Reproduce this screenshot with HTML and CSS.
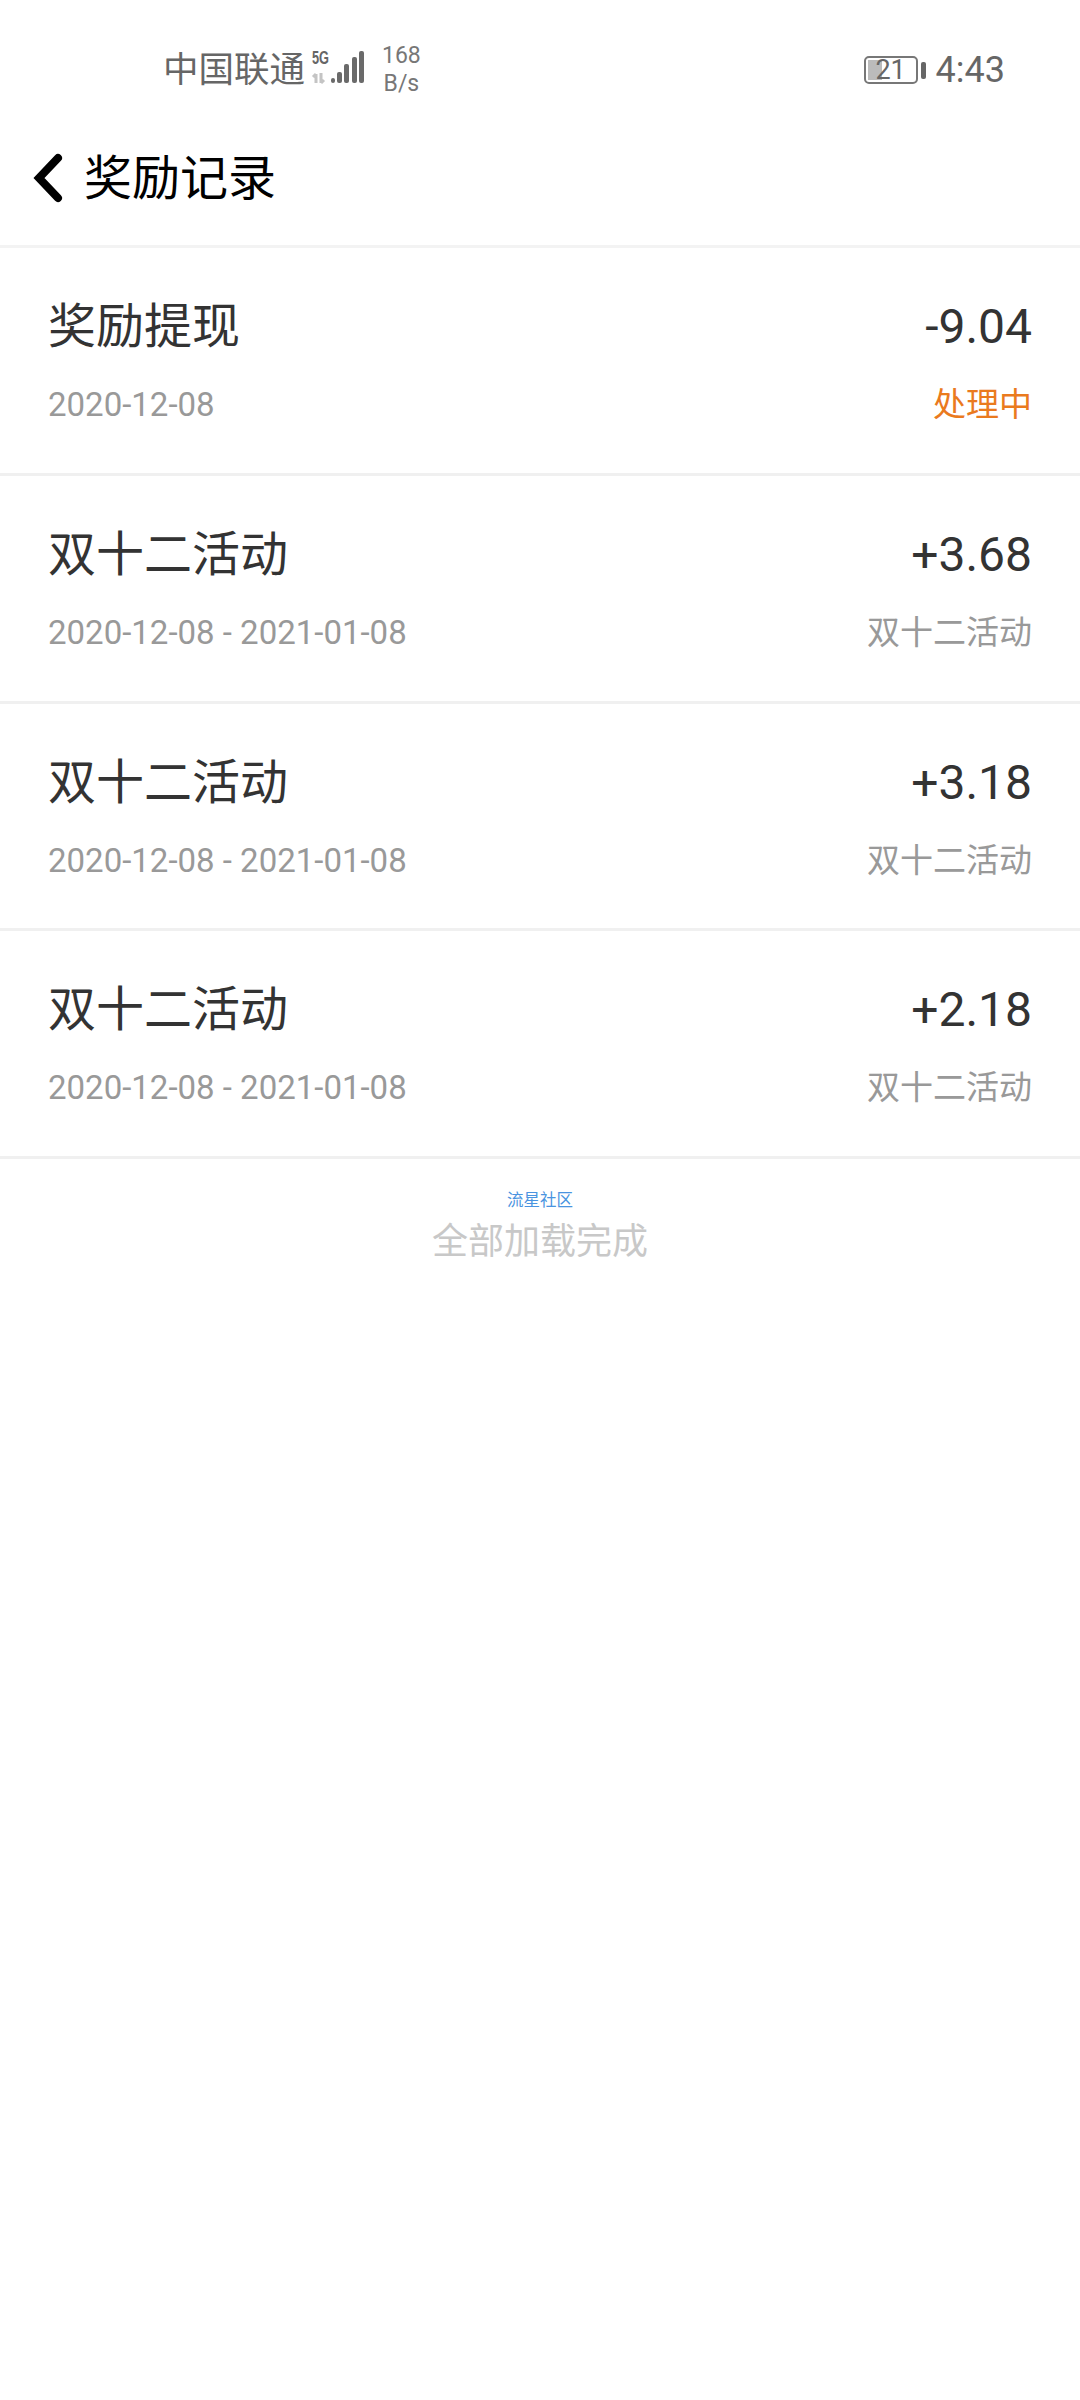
FILE: index.html
```html
<!DOCTYPE html>
<html>

<head>
    <meta charset="utf-8">
    <link rel="stylesheet" href="styles.css">
</head>

<body>
    <div class="status">
        <div class="s-left">
            <span class="carrier">中国联通</span>
            <svg class="signal" width="54" height="34" viewBox="0 0 54 34">
                <text class="five-g" x="1" y="14" textLength="17" lengthAdjust="spacingAndGlyphs">5G</text>
                <path d="M5 33V24M2 27l3-3M10 23v10M10 33l3-3" stroke="#c4c4c4" stroke-width="3" fill="none"/>
                <g fill="#6a6a6a">
                    <rect x="20" y="28" width="4" height="5" rx="2"/>
                    <rect x="26" y="22" width="5" height="11" rx="2"/>
                    <rect x="33" y="14" width="5" height="19" rx="2"/>
                    <rect x="41" y="7" width="5" height="26" rx="2"/>
                    <rect x="48" y="1" width="5" height="32" rx="2"/>
                </g>
            </svg>
            <div class="speed">168<br>B/s</div>
        </div>
        <div class="s-right">
            <div class="battery">
                <div class="level"></div>
                <span class="num">21</span>
            </div>
            <div class="cap"></div>
            <span class="time">4:43</span>
        </div>
    </div>

    <div class="nav">
        <svg class="back" width="32" height="50" viewBox="0 0 32 50">
            <path d="M26 5L7 25l19 20" stroke="#000" stroke-width="8" stroke-linecap="round" stroke-linejoin="miter" fill="none"/>
        </svg>
        <span class="title">奖励记录</span>
    </div>

    <div class="list">
        <div class="row">
            <div class="line">
                <span class="name">奖励提现</span>
                <span class="amount">-9.04</span>
            </div>
            <div class="line sub">
                <span class="date">2020-12-08</span>
                <span class="tag orange">处理中</span>
            </div>
        </div>
        <div class="row">
            <div class="line">
                <span class="name">双十二活动</span>
                <span class="amount">+3.68</span>
            </div>
            <div class="line sub">
                <span class="date">2020-12-08 - 2021-01-08</span>
                <span class="tag">双十二活动</span>
            </div>
        </div>
        <div class="row">
            <div class="line">
                <span class="name">双十二活动</span>
                <span class="amount">+3.18</span>
            </div>
            <div class="line sub">
                <span class="date">2020-12-08 - 2021-01-08</span>
                <span class="tag">双十二活动</span>
            </div>
        </div>
        <div class="row">
            <div class="line">
                <span class="name">双十二活动</span>
                <span class="amount">+2.18</span>
            </div>
            <div class="line sub">
                <span class="date">2020-12-08 - 2021-01-08</span>
                <span class="tag">双十二活动</span>
            </div>
        </div>
    </div>

    <div class="foot">
        <div class="mark">流星社区</div>
        <div class="done">全部加载完成</div>
    </div>
</body>

</html>
```

FILE: styles.css
```css
* {
    padding: 0;
    margin: 0;
    box-sizing: border-box;
}

body {
    width: 1080px;
    height: 2400px;
    background: #fff;
    font-family: Roboto, "Noto Sans CJK SC", sans-serif;
    overflow: hidden;
}

.status {
    height: 140px;
    display: flex;
    justify-content: space-between;
    align-items: center;
    padding: 0 75px 0 163px;
    color: #666;
}

.s-left,
.s-right {
    display: flex;
    align-items: center;
}

.carrier {
    font-size: 35.5px;
    line-height: 48px;
}

.signal {
    margin: 0 0 6px 6px;
    overflow: visible;
}

.five-g {
    font-family: "Liberation Sans", sans-serif;
    font-size: 18px;
    font-weight: bold;
    fill: #666;
}

.speed {
    margin-left: 17px;
    font-size: 23px;
    line-height: 28px;
    text-align: center;
    color: #777;
}

.battery {
    position: relative;
    width: 54px;
    height: 28px;
    border: 2px solid #777;
    border-radius: 5px;
    text-align: center;
    font-size: 27px;
    line-height: 24px;
}

.level {
    position: absolute;
    left: 2px;
    top: 2px;
    bottom: 2px;
    width: 14px;
    background: #bbb;
}

.num {
    position: relative;
}

.cap {
    width: 5px;
    height: 17px;
    margin-left: 3px;
    background: #666;
    border-radius: 2px;
}

.time {
    margin-left: 10px;
    font-size: 36px;
    line-height: 48px;
}

.nav {
    height: 108px;
    display: flex;
    align-items: center;
    padding: 0 0 27px 32px;
    border-bottom: 3px solid #f3f3f3;
}

.back {
    flex: none;
    margin-bottom: 2px;
}

.title {
    margin-left: 20px;
    font-size: 48px;
    line-height: 70px;
    color: #000;
}

.row {
    height: 227.75px;
    padding: 44px 48px 0;
    border-bottom: 3px solid #f0f0f0;
}

.line {
    display: flex;
    justify-content: space-between;
    align-items: center;
    height: 70px;
}

.sub {
    margin-top: 18px;
    height: 50px;
}

.name,
.amount {
    font-size: 48px;
    line-height: 70px;
    color: #333;
}

.date,
.tag {
    font-size: 33px;
    line-height: 50px;
    color: #999;
}

.orange {
    color: #ea7a1e;
}

.foot {
    padding-top: 32px;
    text-align: center;
}

.mark {
    font-size: 16.5px;
    line-height: 20px;
    color: #4a94e0;
}

.done {
    margin-top: 8px;
    font-size: 36px;
    line-height: 46px;
    color: #c8c8c8;
}
```
